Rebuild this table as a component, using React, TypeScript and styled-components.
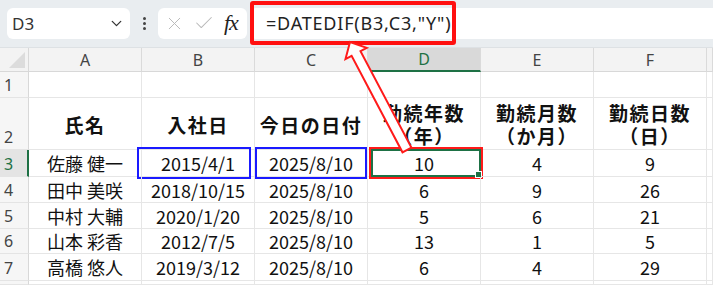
import { Fragment } from 'react';
import styled, { createGlobalStyle } from 'styled-components';
import { X, Check, ChevronDown } from 'lucide-react';

const GlobalStyle = createGlobalStyle`
  html, body {
    margin: 0;
    padding: 0;
    background: #ffffff;
    overflow: hidden;
  }
  body {
    font-family: "Noto Sans", "Noto Sans CJK JP", sans-serif;
  }
`;

const Page = styled.div`
  position: relative;
  width: 713px;
  height: 285px;
  overflow: hidden;
`;

const Toolbar = styled.div`
  height: 48px;
  box-sizing: border-box;
  background: #e9edf0;
  border-bottom: 1px solid #dde1e4;
  padding: 8px 0 9px 7px;
  display: flex;
  align-items: center;
`;

const NameBox = styled.div`
  width: 123px;
  height: 31px;
  box-sizing: border-box;
  background: #ffffff;
  border-radius: 6px;
  display: flex;
  align-items: center;
  justify-content: space-between;
  padding: 0 5px 0 5px;
  font-size: 17px;
  color: #333333;
`;

const Dots = styled.div`
  width: 28px;
  display: flex;
  flex-direction: column;
  align-items: center;
  gap: 2px;

  span {
    width: 3px;
    height: 3px;
    border-radius: 50%;
    background: #444444;
  }
`;

const FxButtons = styled.div`
  width: 89px;
  height: 31px;
  box-sizing: border-box;
  background: #ffffff;
  border-radius: 6px;
  display: flex;
  align-items: center;
  gap: 8px;
  padding: 0 6px 0 6px;
`;

const FxLabel = styled.span`
  font-family: "Liberation Serif", serif;
  font-style: italic;
  font-size: 22px;
  color: #222222;
  margin-left: 1px;
  letter-spacing: -1px;
`;

const FormulaField = styled.div`
  flex: 1;
  height: 31px;
  margin-left: 3px;
  background: #ffffff;
  border-radius: 6px 0 0 6px;
  display: flex;
  align-items: center;
`;

const FormulaHighlight = styled.div`
  height: 44px;
  flex-shrink: 0;
  box-sizing: border-box;
  border: 4px solid #ff1010;
  border-radius: 3px;
  padding: 0 0 0 12px;
  width: 206px;
  display: flex;
  align-items: center;
  font-size: 18px;
  color: #222222;
  letter-spacing: 0.8px;
`;

const Sheet = styled.div`
  display: grid;
  grid-template-columns: 29px repeat(6, 113px) 1fr;
  grid-template-rows: 24px 26px 52px 27px 26px 26px 25px 27px 1fr;
  height: 237px;
  font-family: "Noto Sans CJK JP", sans-serif;
`;

const Corner = styled.div`
  position: relative;
  background: #f3f3f3;
  border-right: 1px solid #d8d8d8;
  border-bottom: 1px solid #d8d8d8;

  &::after {
    content: '';
    position: absolute;
    right: 3px;
    bottom: 3px;
    border-left: 16px solid transparent;
    border-bottom: 16px solid #dcdcdc;
  }
`;

const ColHeader = styled.div<{ $active?: boolean }>`
  box-sizing: border-box;
  background: ${({ $active }) => ($active ? '#d9d9d9' : '#f3f3f3')};
  border-right: 1px solid #dadada;
  border-bottom: ${({ $active }) => ($active ? '2px solid #1e7145' : '1px solid #d8d8d8')};
  color: ${({ $active }) => ($active ? '#1e7145' : '#444444')};
  font-family: "Noto Sans", sans-serif;
  font-size: 16px;
  display: flex;
  align-items: center;
  justify-content: center;
`;

const RowHeader = styled.div<{ $active?: boolean }>`
  box-sizing: border-box;
  background: ${({ $active }) => ($active ? '#e4e4e4' : '#f6f6f6')};
  border-right: ${({ $active }) => ($active ? '2px solid #1e7145' : '1px solid #d8d8d8')};
  border-bottom: 1px solid #e4e4e4;
  color: ${({ $active }) => ($active ? '#1e7145' : '#444444')};
  font-family: "Noto Sans", sans-serif;
  font-size: 16px;
  display: flex;
  align-items: flex-end;
  padding: 0 0 1px 4px;
`;

const Cell = styled.div<{ $bold?: boolean }>`
  position: relative;
  box-sizing: border-box;
  border-right: 1px solid #e6e6e6;
  border-bottom: 1px solid #e6e6e6;
  display: flex;
  align-items: center;
  justify-content: center;
  text-align: center;
  font-size: ${({ $bold }) => ($bold ? '19px' : '18px')};
  font-weight: ${({ $bold }) => ($bold ? 700 : 400)};
  line-height: 23px;
  letter-spacing: ${({ $bold }) => ($bold ? '1.5px' : '0')};
  color: #111111;
  white-space: pre-line;
  padding-top: 1px;
`;

const Outline = styled.div<{ $color: string; $width: number; $inset: string }>`
  position: absolute;
  inset: ${({ $inset }) => $inset};
  border: ${({ $width, $color }) => `${$width}px solid ${$color}`};
  pointer-events: none;
`;

const FillHandle = styled.div`
  position: absolute;
  right: -3px;
  bottom: -3px;
  width: 5px;
  height: 5px;
  background: #1e7145;
  border: 1px solid #ffffff;
`;

const ArrowLayer = styled.svg`
  position: absolute;
  left: 0;
  top: 0;
  pointer-events: none;
`;

const columns = ['A', 'B', 'C', 'D', 'E', 'F', ''];

const headerRow = ['氏名', '入社日', '今日の日付', '勤続年数\n（年）', '勤続月数\n（か月）', '勤続日数\n（日）', ''];

const rows = [
  ['佐藤 健一', '2015/4/1', '2025/8/10', '10', '4', '9'],
  ['田中 美咲', '2018/10/15', '2025/8/10', '6', '9', '26'],
  ['中村 大輔', '2020/1/20', '2025/8/10', '5', '6', '21'],
  ['山本 彩香', '2012/7/5', '2025/8/10', '13', '1', '5'],
  ['高橋 悠人', '2019/3/12', '2025/8/10', '6', '4', '29'],
];

// arrow from D3 up to the formula text
const tip = [350, 42];
const dir = [0.467, 0.885];
const nrm = [0.885, -0.467];
const pt = (along: number, side: number) =>
  `${(tip[0] + dir[0] * along + nrm[0] * side).toFixed(1)},${(tip[1] + dir[1] * along + nrm[1] * side).toFixed(1)}`;
const arrowPoints = [
  pt(0, 0),
  pt(13, 12),
  pt(13, 5),
  pt(122, 5),
  pt(122, -5),
  pt(13, -5),
  pt(13, -12),
].join(' ');

export default function App() {
  return (
    <Page>
      <GlobalStyle />
      <Toolbar>
        <NameBox>
          <span>D3</span>
          <ChevronDown size={17} strokeWidth={1.8} color="#333" />
        </NameBox>
        <Dots>
          <span />
          <span />
          <span />
        </Dots>
        <FxButtons>
          <X size={21} strokeWidth={1.1} color="#b8b8b8" />
          <Check size={22} strokeWidth={1.1} color="#b8b8b8" />
          <FxLabel>fx</FxLabel>
        </FxButtons>
        <FormulaField>
          <FormulaHighlight>=DATEDIF(B3,C3,"Y")</FormulaHighlight>
        </FormulaField>
      </Toolbar>

      <Sheet>
        <Corner />
        {columns.map((c, i) => (
          <ColHeader key={`h${i}`} $active={c === 'D'}>
            {c}
          </ColHeader>
        ))}

        <RowHeader>1</RowHeader>
        {columns.map((_, i) => (
          <Cell key={`r1${i}`} />
        ))}

        <RowHeader>2</RowHeader>
        {headerRow.map((t, i) => (
          <Cell key={`r2${i}`} $bold>
            {t}
          </Cell>
        ))}

        {rows.map((r, ri) => (
          <Fragment key={`row${ri}`}>
            <RowHeader $active={ri === 0}>{ri + 3}</RowHeader>
            {[...r, ''].map((v, ci) => (
              <Cell key={`c${ri}-${ci}`}>
                {v}
                {ri === 0 && ci === 1 && <Outline $color="#1a1aff" $width={2} $inset="-3px 3px -3px -5px" />}
                {ri === 0 && ci === 2 && <Outline $color="#1a1aff" $width={2} $inset="-3px 0 -3px 0" />}
                {ri === 0 && ci === 3 && (
                  <>
                    <Outline $color="#ff1a1a" $width={2} $inset="-3px -3px -3px 1px" />
                    <Outline $color="#1e7145" $width={2} $inset="-1px -1px -1px 3px">
                      <FillHandle />
                    </Outline>
                  </>
                )}
              </Cell>
            ))}
          </Fragment>
        ))}

        <RowHeader />
        {columns.map((_, i) => (
          <Cell key={`r8${i}`} />
        ))}
      </Sheet>

      <ArrowLayer width="713" height="285" viewBox="0 0 713 285">
        <polygon points={arrowPoints} fill="#ffffff" stroke="#ff1a1a" strokeWidth="2" strokeLinejoin="miter" />
      </ArrowLayer>
    </Page>
  );
}
